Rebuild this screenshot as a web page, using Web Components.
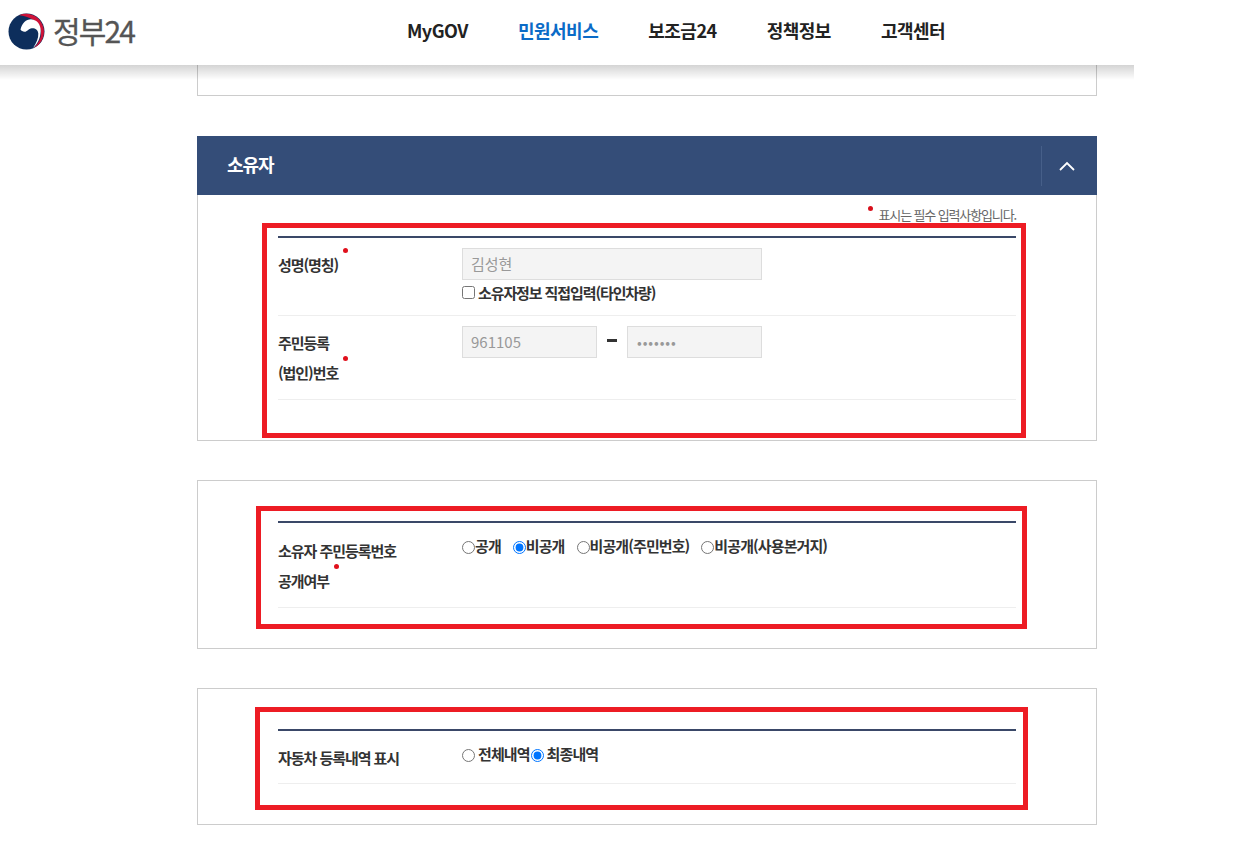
<!DOCTYPE html>
<html lang="ko">
<head>
<meta charset="utf-8">
<title>정부24</title>
<style>
  html, body {
    margin: 0;
    background: #fff;
    font-family: "Noto Sans CJK KR", "Noto Sans", sans-serif;
    color: #333;
  }
</style>
</head>
<body>

<gov-page>
  <gov-header slot="header">
    <gov-nav-link>MyGOV</gov-nav-link>
    <gov-nav-link active>민원서비스</gov-nav-link>
    <gov-nav-link>보조금24</gov-nav-link>
    <gov-nav-link>정책정보</gov-nav-link>
    <gov-nav-link>고객센터</gov-nav-link>
  </gov-header>

  <form-card stub></form-card>

  <section-bar>소유자</section-bar>
  <form-card attached>
    <span slot="legend">표시는 필수 입력사항입니다.</span>
    <red-mark style="left:64px;top:28px;width:764px;height:215px"></red-mark>
    <form-table>
      <form-row>
        <span slot="label">성명(명칭)<req-dot></req-dot></span>
        <text-field width="300">김성현</text-field>
        <check-option>소유자정보 직접입력(타인차량)</check-option>
      </form-row>
      <form-row style="--row-bottom:11px">
        <span slot="label">주민등록<br>(법인)번호<req-dot></req-dot></span>
        <id-number>
          <text-field slot="front" width="135">961105</text-field>
          <text-field slot="back" width="135" masked>•••••••</text-field>
        </id-number>
      </form-row>
    </form-table>
  </form-card>

  <form-card>
    <red-mark style="left:58px;top:25px;width:771px;height:123px"></red-mark>
    <form-table>
      <form-row style="--label-top:3px;--row-bottom:11px">
        <span slot="label">소유자 주민등록번호<br>공개여부<req-dot></req-dot></span>
        <radio-group gap="12">
          <radio-option>공개</radio-option>
          <radio-option checked>비공개</radio-option>
          <radio-option>비공개(주민번호)</radio-option>
          <radio-option>비공개(사용본거지)</radio-option>
        </radio-group>
      </form-row>
    </form-table>
  </form-card>

  <form-card>
    <red-mark style="left:57px;top:18px;width:773px;height:103px"></red-mark>
    <form-table>
      <form-row>
        <span slot="label">자동차 등록내역 표시</span>
        <radio-group gap="1">
          <radio-option spaced>전체내역</radio-option>
          <radio-option spaced checked>최종내역</radio-option>
        </radio-group>
      </form-row>
    </form-table>
  </form-card>
</gov-page>

<script>
  class GovPage extends HTMLElement {
    constructor() {
      super();
      this.attachShadow({ mode: 'open' });
    }
    connectedCallback() {
      this.shadowRoot.innerHTML = `
        <style>
          :host { display: block; width: 1134px; }
          .content {
            display: flex;
            flex-direction: column;
            width: 900px;
            margin-left: 197px;
          }
        </style>
        <slot name="header"></slot>
        <div class="content"><slot></slot></div>
      `;
    }
  }
  customElements.define('gov-page', GovPage);

  class GovHeader extends HTMLElement {
    constructor() {
      super();
      this.attachShadow({ mode: 'open' });
    }
    connectedCallback() {
      this.shadowRoot.innerHTML = `
        <style>
          :host {
            display: flex;
            align-items: center;
            position: relative;
            z-index: 2;
            height: 65px;
            background: #fff;
          }
          /* soft shade that falls over the page below the bar */
          :host::after {
            content: "";
            position: absolute;
            left: 0;
            right: 0;
            top: 100%;
            height: 15px;
            background: linear-gradient(rgba(0, 0, 0, .17), rgba(0, 0, 0, 0));
          }
          .logo {
            display: flex;
            align-items: center;
            gap: 8px;
            width: 399px;
            padding-left: 8px;
            box-sizing: border-box;
            flex: none;
          }
          .logo svg { display: block; width: 37px; height: 37px; margin-top: -3px; }
          .name {
            font-size: 30px;
            line-height: 36px;
            letter-spacing: -1.900px;
            -webkit-text-stroke: .3px #555;
            color: #555;
            margin-top: -6px;
          }
          nav { display: flex; gap: 50px; margin: -6px 0 0 8px; }
        </style>
        <div class="logo">
          <svg viewBox="0 0 37 37">
            <circle cx="18.500" cy="18.500" r="18" fill="#0d2e5c"/>
            <path d="M11 2.200A18 18 0 0 1 26 34.900C32 29 34 23 32.500 16.500C30.500 8 21 3 11 2.200Z" fill="#cf1238"/>
            <path d="M12.500 16.500C14 10 18 6.500 23 6.300C29.500 6.800 32.800 12 32.700 18C32.500 25 29.500 31 25 35C28.500 30 30.600 25 30.300 20.500C29.800 16.500 27 15 23.700 15.300C20.500 15.700 19 19 16.500 18.800C14.800 18.700 13.300 17.800 12.500 16.500Z" fill="#fff"/>
          </svg>
          <div class="name">정부24</div>
        </div>
        <nav><slot></slot></nav>
      `;
    }
  }
  customElements.define('gov-header', GovHeader);

  class GovNavLink extends HTMLElement {
    constructor() {
      super();
      this.attachShadow({ mode: 'open' });
    }
    connectedCallback() {
      this.shadowRoot.innerHTML = `
        <style>
          :host {
            display: block;
            font-size: 18px;
            font-weight: 700;
            line-height: 26px;
            letter-spacing: -.5px;
            color: #222;
            cursor: pointer;
          }
          :host([active]) { color: #0b6bc7; }
        </style>
        <slot></slot>
      `;
    }
  }
  customElements.define('gov-nav-link', GovNavLink);

  class SectionBar extends HTMLElement {
    constructor() {
      super();
      this.attachShadow({ mode: 'open' });
    }
    connectedCallback() {
      this.shadowRoot.innerHTML = `
        <style>
          :host {
            display: flex;
            align-items: center;
            height: 59px;
            margin-top: 40px;
            padding-left: 30px;
            background: #344d78;
            color: #fff;
            font-size: 18px;
            font-weight: 700;
            letter-spacing: -1px;
          }
          .title { flex: 1; margin-top: -4px; }
          .toggle {
            display: flex;
            align-items: center;
            justify-content: center;
            width: 56px;
            height: 40px;
            padding-right: 6px;
            box-sizing: border-box;
            border-left: 1px solid #465f89;
          }
          svg { display: block; }
        </style>
        <div class="title"><slot></slot></div>
        <div class="toggle">
          <svg width="16" height="10" viewBox="0 0 16 10" fill="none" stroke="#fff" stroke-width="1.800">
            <path d="M1 9 8 2l7 7"/>
          </svg>
        </div>
      `;
    }
  }
  customElements.define('section-bar', SectionBar);

  class FormCard extends HTMLElement {
    constructor() {
      super();
      this.attachShadow({ mode: 'open' });
    }
    connectedCallback() {
      this.shadowRoot.innerHTML = `
        <style>
          :host {
            display: block;
            position: relative;
            box-sizing: border-box;
            margin-top: 39px;
            padding: 40px 80px;
            border: 1px solid #ccc;
            background: #fff;
          }
          :host([stub]) { height: 31px; margin-top: 0; padding: 0; border-top: 0; }
          :host([attached]) { margin-top: 0; padding-top: 10px; border-top: 0; }
          .legend { display: none; }
          :host([attached]) .legend {
            display: flex;
            justify-content: flex-end;
            height: 20px;
            margin-bottom: 11px;
            font-size: 13px;
            line-height: 20px;
            letter-spacing: -1.130px;
            color: #666;
          }
          .legend i {
            width: 5px;
            height: 5px;
            margin: 1px 6px 0 0;
            border-radius: 50%;
            background: #d8101c;
          }
        </style>
        <div class="legend"><i></i><slot name="legend"></slot></div>
        <slot></slot>
      `;
    }
  }
  customElements.define('form-card', FormCard);

  // red annotation frames lie over the form, so they are placed inside their card
  class RedMark extends HTMLElement {
    constructor() {
      super();
      this.attachShadow({ mode: 'open' });
    }
    connectedCallback() {
      this.shadowRoot.innerHTML = `
        <style>
          :host {
            display: block;
            position: absolute;
            box-sizing: border-box;
            border: 5px solid #ed1c24;
            pointer-events: none;
          }
        </style>
      `;
    }
  }
  customElements.define('red-mark', RedMark);

  class FormTable extends HTMLElement {
    constructor() {
      super();
      this.attachShadow({ mode: 'open' });
    }
    connectedCallback() {
      this.shadowRoot.innerHTML = `
        <style>
          :host { display: block; border-top: 2px solid #3a4868; }
        </style>
        <slot></slot>
      `;
    }
  }
  customElements.define('form-table', FormTable);

  class FormRow extends HTMLElement {
    constructor() {
      super();
      this.attachShadow({ mode: 'open' });
    }
    connectedCallback() {
      this.shadowRoot.innerHTML = `
        <style>
          :host {
            display: grid;
            grid-template-columns: 184px 1fr;
            padding: 10px 0 var(--row-bottom, 10px);
            border-bottom: 1px solid #eee;
          }
          .label {
            padding-top: var(--label-top, 2px);
            font-size: 15px;
            font-weight: 700;
            line-height: 30px;
            letter-spacing: -1.050px;
            color: #333;
          }
          .value { display: flex; flex-direction: column; align-items: flex-start; }
        </style>
        <div class="label"><slot name="label"></slot></div>
        <div class="value"><slot></slot></div>
      `;
    }
  }
  customElements.define('form-row', FormRow);

  class ReqDot extends HTMLElement {
    constructor() {
      super();
      this.attachShadow({ mode: 'open' });
    }
    connectedCallback() {
      this.shadowRoot.innerHTML = `
        <style>
          :host {
            display: inline-block;
            width: 5px;
            height: 5px;
            margin-left: 5px;
            vertical-align: 12px;
            transform: translateY(-6px);
            border-radius: 50%;
            background: #e0101c;
          }
        </style>
      `;
    }
  }
  customElements.define('req-dot', ReqDot);

  class TextField extends HTMLElement {
    constructor() {
      super();
      this.attachShadow({ mode: 'open' });
    }
    connectedCallback() {
      const width = this.getAttribute('width') || 300;
      this.shadowRoot.innerHTML = `
        <style>
          :host {
            display: block;
            box-sizing: border-box;
            width: ${width}px;
            height: 32px;
            padding: 0 8px;
            border: 1px solid #ddd;
            background: #f4f4f4;
            color: #999;
            font-size: 15px;
            line-height: 29px;
          }
          :host([masked]) {
            padding-left: 9px;
            font-size: 14px;
            letter-spacing: .9px;
            line-height: 30px;
          }
        </style>
        <slot></slot>
      `;
    }
  }
  customElements.define('text-field', TextField);

  class IdNumber extends HTMLElement {
    constructor() {
      super();
      this.attachShadow({ mode: 'open' });
    }
    connectedCallback() {
      this.shadowRoot.innerHTML = `
        <style>
          :host { display: flex; width: 300px; justify-content: space-between; }
          .dash {
            width: 10px;
            height: 3px;
            margin-top: 13px;
            background: #333;
          }
        </style>
        <slot name="front"></slot>
        <div class="dash"></div>
        <slot name="back"></slot>
      `;
    }
  }
  customElements.define('id-number', IdNumber);

  class CheckOption extends HTMLElement {
    constructor() {
      super();
      this.attachShadow({ mode: 'open' });
    }
    connectedCallback() {
      this.shadowRoot.innerHTML = `
        <style>
          :host {
            display: flex;
            align-items: center;
            height: 25px;
            font-size: 15px;
            font-weight: 700;
            letter-spacing: -1.100px;
            color: #333;
          }
          input { width: 13px; height: 13px; margin: 0 3px 0 0; }
        </style>
        <input type="checkbox"><slot></slot>
      `;
    }
  }
  customElements.define('check-option', CheckOption);

  class RadioGroup extends HTMLElement {
    constructor() {
      super();
      this.attachShadow({ mode: 'open' });
    }
    connectedCallback() {
      const gap = this.getAttribute('gap') || 0;
      this.shadowRoot.innerHTML = `
        <style>
          :host { display: flex; gap: ${gap}px; }
        </style>
        <slot></slot>
      `;
    }
  }
  customElements.define('radio-group', RadioGroup);

  class RadioOption extends HTMLElement {
    constructor() {
      super();
      this.attachShadow({ mode: 'open' });
    }
    connectedCallback() {
      const checked = this.hasAttribute('checked') ? 'checked' : '';
      this.shadowRoot.innerHTML = `
        <style>
          :host {
            display: flex;
            align-items: center;
            height: 28px;
            font-size: 15px;
            font-weight: 700;
            letter-spacing: -.9px;
            color: #333;
          }
          input { width: 13px; height: 13px; margin: 0; flex: none; }
          :host([spaced]) input { margin-right: 3px; }
          .text { margin-top: -3px; }
        </style>
        <input type="radio" ${checked}><span class="text"><slot></slot></span>
      `;
    }
  }
  customElements.define('radio-option', RadioOption);
</script>
</body>
</html>
